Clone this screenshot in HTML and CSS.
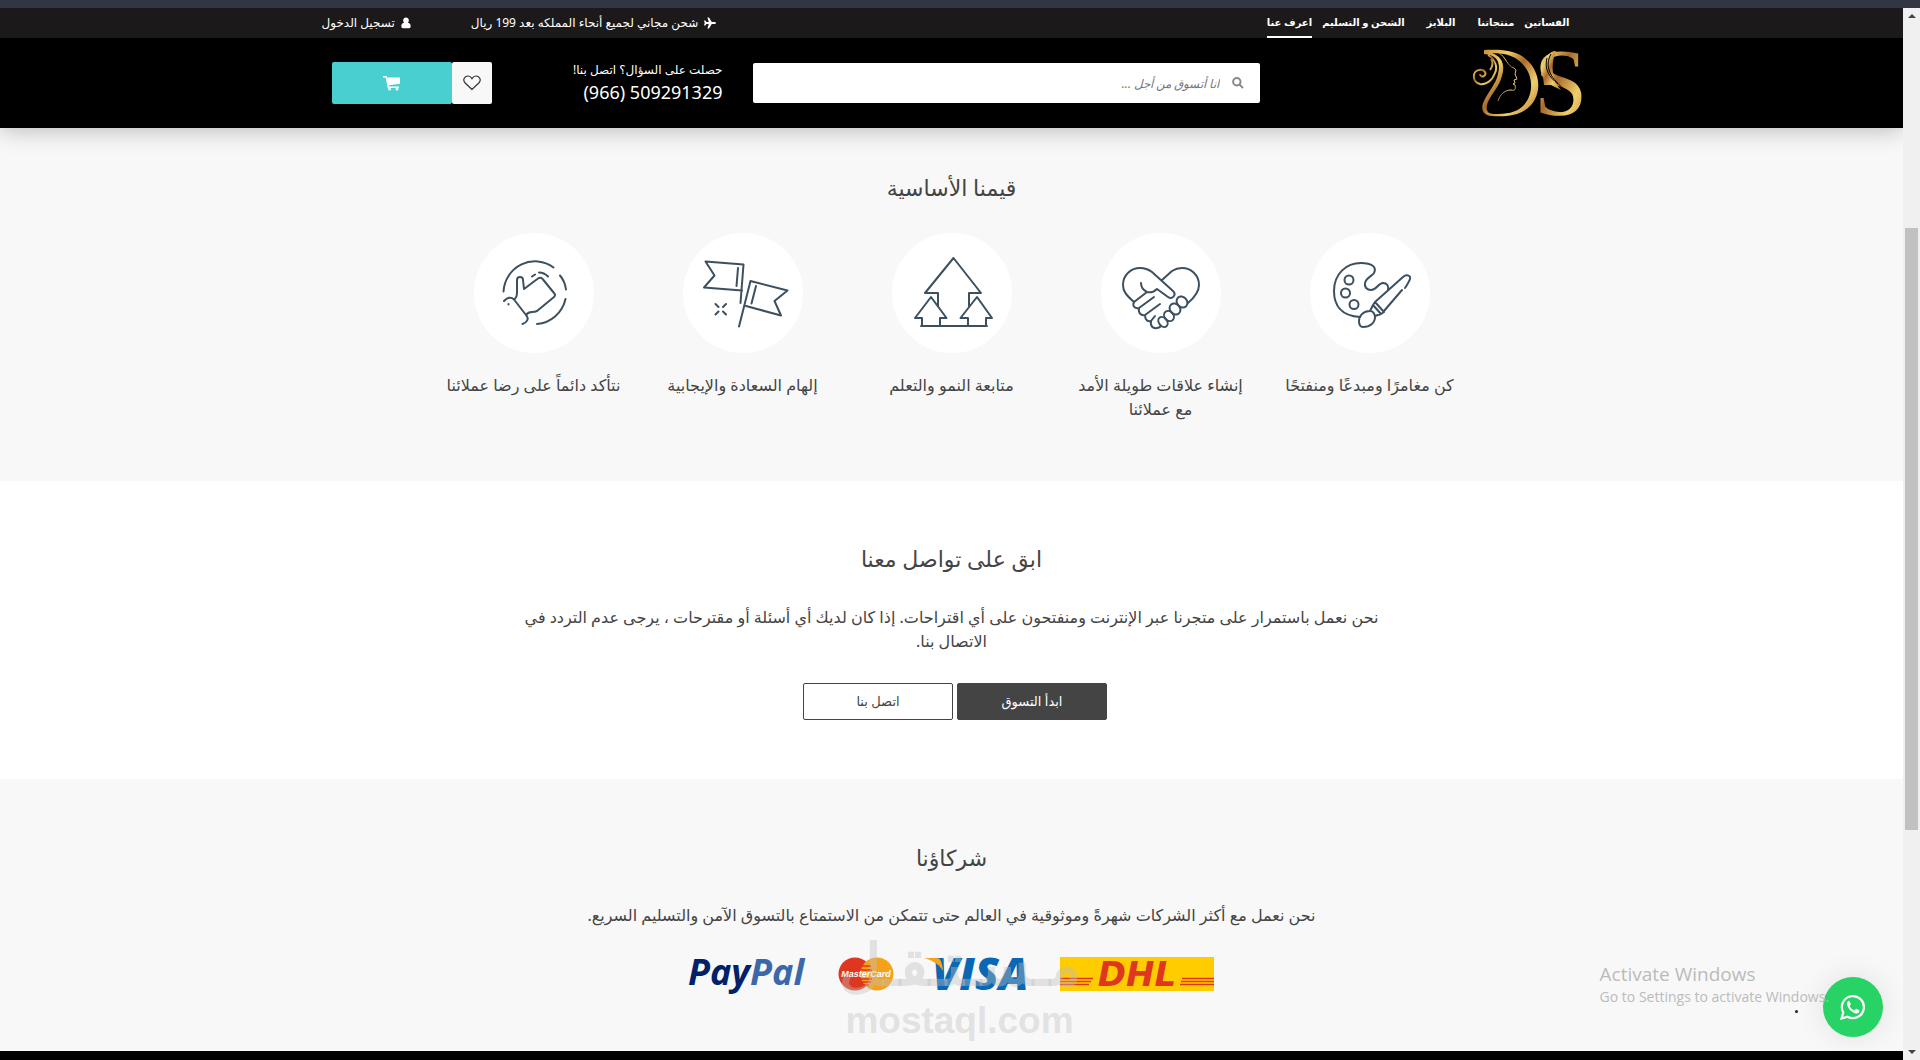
FILE: index.html
```
<!DOCTYPE html>
<html lang="ar" dir="rtl">
<head>
    <meta charset="UTF-8">
    <meta name="viewport" content="width=device-width, initial-scale=1.0">
    <title>DS - اعرف عنا</title>
    <link rel="stylesheet" href="styles.css">
</head>
<body>

    <div class="window-edge"></div>

    <div class="window">
        <div class="page">

            <header class="site-header">
                <div class="topbar">
                    <div class="container topbar-inner">
                        <nav>
                            <a href="#dresses">الفساتين</a>
                            <a href="#products">منتجاتنا</a>
                            <a href="#blazers" class="wide">البلايز</a>
                            <a href="#shipping">الشحن و التسليم</a>
                            <a href="#about" class="active">اعرف عنا</a>
                        </nav>
                        <div class="top-info">
                            <p class="shipping">
                                <svg width="12" height="12" viewBox="0 0 12 12"><path d="M12 6c0 .6-.9 1-2 1H7.800L5 11.500H3.400L4.800 7H2.500L1.300 8.500H0L.7 6 0 3.500h1.300L2.500 5h2.300L3.400.5H5L7.800 5H10c1.100 0 2 .4 2 1z" fill="#fff"/></svg>
                                شحن مجاني لجميع أنحاء المملكه بعد 199 ريال
                            </p>
                            <a href="#login" class="login">
                                <svg width="10" height="12" viewBox="0 0 10 12"><path d="M5 .5a2.800 3 0 0 1 2 5.200c1.800.3 2.700 1.500 2.700 3.500 0 1.300-.7 2-1.700 2H2c-1 0-1.700-.7-1.700-2 0-2 .9-3.200 2.700-3.500A2.800 3 0 0 1 5 .5z" fill="#fff"/></svg>
                                تسجيل الدخول
                            </a>
                        </div>
                    </div>
                </div>

                <div class="masthead">
                    <div class="container masthead-inner">
                        <a href="#home" class="logo" aria-label="DS">
                            <svg width="110" height="70" viewBox="0 0 110 70" direction="ltr">
                                <defs>
                                    <linearGradient id="gold" x1="0" y1="0" x2="1" y2="1">
                                        <stop offset="0" stop-color="#c98a2e"/>
                                        <stop offset=".25" stop-color="#efcf6a"/>
                                        <stop offset=".45" stop-color="#a9692b"/>
                                        <stop offset=".7" stop-color="#efcf6a"/>
                                        <stop offset="1" stop-color="#b9772c"/>
                                    </linearGradient>
                                </defs>
                                <!-- flowing hair and frame -->
                                <path d="M12 2C36 1 48 4 57 14c12 13 12 32 2 43-9 10-23 12-39 11-9 0-12-7-8-15 4-9 12-17 14-27 3-12-1-19-14-20L12 2zm8 3c11 4 13 13 10 23-3 11-10 17-14 26-3 8-1 12 6 12 12 0 22-1 29-8 11-11 10-29 2-39C45 8 34 5 20 5z" fill="url(#gold)" fill-rule="evenodd"/>
                                <path d="M16 7c7 4 10 12 7 18-3 8-9 12-15 11-8-2-8-13-1-14 6-1 8 4 5 6-2 1-4 0-4-2M18 22c3-4 3-8 1-11" fill="none" stroke="url(#gold)" stroke-width="2"/>
                                <!-- profile -->
                                <path d="M27 5c7 4 8 13 15 15l2 2-1 4 2 5-3 1 1 3-2 1 2 1c1 4 0 6-4 5-7 0-11 5-13 11" fill="none" stroke="url(#gold)" stroke-width="1"/>
                                <text x="62" y="67" class="logo-letter" fill="url(#gold)">S</text>
                                <path d="M82 3c-9 4-12 10-11 18l-2 6 2 2 1 8 7 0 10 5C80 33 78 18 84 3z" fill="url(#gold)"/>
                                <path d="M79 6c-6 11-3 22 13 35M75 10c-3 11 2 19 11 26" fill="none" stroke="#000" stroke-width="1"/>
                            </svg>
                        </a>

                        <form class="search">
                            <label for="q"><svg width="12" height="12" viewBox="0 0 12 12"><circle cx="4.800" cy="4.800" r="3.700"/><path d="M7.600 7.600L11 11"/></svg></label>
                            <input type="text" id="q" placeholder="انا أتسوق من أجل ...">
                        </form>

                        <div class="contact">
                            <p>حصلت على السؤال؟ اتصل بنا!</p>
                            <a href="tel:966509291329" dir="ltr">(966) 509291329</a>
                        </div>

                        <div class="actions">
                            <button type="button" class="wish" aria-label="المفضلة">
                                <svg width="18" height="16" viewBox="0 0 18 16"><path d="M9 14.500L2.200 8C-1 4.500 2 1 5 1c2 0 3.200 1.300 4 2.600C9.800 2.300 11 1 13 1c3 0 6 3.500 2.800 7z" fill="none" stroke="#333" stroke-width="1.200"/></svg>
                            </button>
                            <button type="button" class="cart" aria-label="السلة">
                                <svg width="18" height="16" viewBox="0 0 18 16"><path d="M0 1h3.500l.5 1.500h13v6.200L6 10.200l.2 1.300H16V13H4.800L2.600 2.500H0z" fill="#fff"/><circle cx="6.500" cy="14" r="1.500" fill="#fff"/><circle cx="14" cy="14" r="1.500" fill="#fff"/></svg>
                            </button>
                        </div>
                    </div>
                </div>
            </header>

            <section class="values">
                <h2>قيمنا الأساسية</h2>
                <ul>
                    <li>
                        <svg class="icon" viewBox="0 0 120 120">
                            <path d="M50 84C31 83 24 72 24 58c0-17 12-28 27-28 11 0 16 4 13 10-2 3-8 5-9 10-1 4 2 7 6 7 6 0 7-7 12-7 4 0 6 3 5 7"/>
                            <circle cx="39" cy="47" r="4.500"/><circle cx="35.500" cy="60" r="4.500"/><circle cx="44" cy="71.500" r="4.500"/>
                            <path d="M65 69l28-25c3-3 8-2 7 2-1 3-3 6-5 9M92 57L74 78M65 69l9 10M63 72l8 9M65 69l-2 3-3 6M74 79l-3 2-6 2M60 78c-7 0-11 5-11 10 0 4 1 6 4 6 7 0 12-4 12-10 0-3-2-6-5-6z"/>
                        </svg>
                        <p>كن مغامرًا ومبدعًا ومنفتحًا</p>
                    </li>
                    <li>
                        <svg class="icon" viewBox="0 0 120 120">
                            <path d="M33 69C25 62 22 58 22 52c0-10 8-17 17-17 5 0 8 1 12 4l21 19c4 4-1 9-5 6l-11-8c-3 3-6 4-10 3-4-2-6-5-6-9M46 59L33 69M61 47l10-9c3-2 6-3 10-3 9 0 17 7 17 17 0 7-4 12-11 18"/>
                            <path d="M33 69c-2 4 1 7 5 6-1 5 2 8 6 7 0 5 3 7 6 6M38 75l15-11M44 82l15-11M50 88l4-5"/>
                            <ellipse cx="81" cy="69" rx="5" ry="6" transform="rotate(-40 81 69)"/>
                            <ellipse cx="74" cy="76" rx="5" ry="6" transform="rotate(-40 74 76)"/>
                            <ellipse cx="68" cy="83" rx="4.500" ry="5.500" transform="rotate(-40 68 83)"/>
                            <ellipse cx="62" cy="89" rx="4" ry="5.500" transform="rotate(-40 62 89)"/>
                            <path d="M50 88c-1 5 2 8 6 7 2 0 3-1 4-2"/>
                        </svg>
                        <p>إنشاء علاقات طويلة الأمد مع عملائنا</p>
                    </li>
                    <li>
                        <svg class="icon" viewBox="0 0 120 120">
                            <path d="M46 73V60H33l28.500-35L89 60H77v13M30 93v-8h-7l16-21 15.500 21H48v8M76 93v-8h-7.500L85 64l15 21h-6v8M29 93h66"/>
                        </svg>
                        <p>متابعة النمو والتعلم</p>
                    </li>
                    <li>
                        <svg class="icon" viewBox="0 0 120 120">
                            <path d="M59 57.500l-38-3 10.500-12-9-14 38 3L57.500 70M55 35l-1.500 18M67.500 48l37 9.500-13 10.500 6.500 14.500L63 73M67.500 48L56 93.500M73 53l-4.500 17.500M32.500 71l3 3M43 71l-3 3M32.500 81.500l3-3M43 81.500l-3-3"/>
                        </svg>
                        <p>إلهام السعادة والإيجابية</p>
                    </li>
                    <li>
                        <svg class="icon" viewBox="0 0 120 120">
                            <path d="M29.500 58.500A31.500 32 0 0 1 79.500 34.500M86 42.500q5 6 6 14M91.500 66A32 32 0 0 1 63 91"/>
                            <path d="M40 66.500q3-2 3-7V47c0-4 6-4 6 0l1 9 14-10.500q3-2 5 1L80 60q2 2 0 4L63 78q-2 1-5 1-4 0-6 3L40 66.500c-3-3-7-2-10 1.500M52 82c4 4 0 8-3.500 9M58 43.500l3-2M65 39.500q5 0 9 4M34.500 71v.5"/>
                        </svg>
                        <p>نتأكد دائماً على رضا عملائنا</p>
                    </li>
                </ul>
            </section>

            <section class="touch">
                <h2>ابق على تواصل معنا</h2>
                <p>نحن نعمل باستمرار على متجرنا عبر الإنترنت ومنفتحون على أي اقتراحات. إذا كان لديك أي أسئلة أو مقترحات ، يرجى عدم التردد في الاتصال بنا.</p>
                <div class="buttons">
                    <a href="#shop" class="btn btn-dark">ابدأ التسوق</a>
                    <a href="#contact" class="btn">اتصل بنا</a>
                </div>
            </section>

            <section class="partners">
                <h2>شركاؤنا</h2>
                <p>نحن نعمل مع أكثر الشركات شهرةً وموثوقية في العالم حتى تتمكن من الاستمتاع بالتسوق الآمن والتسليم السريع.</p>
                <div class="brands" dir="ltr">
                    <svg width="120" height="42" viewBox="0 0 120 42" class="paypal"><text x="0" y="28"><tspan fill="#012169">Pay</tspan><tspan fill="#3a68a8">Pal</tspan></text></svg>
                    <svg width="56" height="34" viewBox="0 0 56 34" class="mastercard">
                        <circle cx="17" cy="17" r="16.500" fill="#df3620"/><circle cx="39" cy="17" r="16.500" fill="#f5a21b"/>
                        <path d="M24 9h9M22 13h12M22 22h12M23 25h10M25 28h6" stroke="#df3620" stroke-width="1.500"/>
                        <text x="28" y="20">MasterCard</text>
                    </svg>
                    <svg width="106" height="34" viewBox="0 0 106 34" class="visa"><text x="8" y="33">VISA</text><path d="M0 1h13c3 0 5 3 6 13C15 7 8 3 0 1z" fill="#f5a21b"/></svg>
                    <svg width="154" height="34" viewBox="0 0 154 34" class="dhl">
                        <path d="M0 0h154v34H0z" fill="#fc0"/>
                        <path d="M0 21.500h33M0 24.500h31M0 27.500h29M122 21.500h32M121 24.500h33M120 27.500h34" stroke="#df3620" stroke-width="1.500"/>
                        <text x="77" y="29">DHL</text>
                    </svg>
                </div>
                <div class="watermark">
                    <span class="watermark-ar">مـسـتـقـل</span>
                    <span class="watermark-en">mostaql.com</span>
                </div>
            </section>

            <footer></footer>

            <div class="activate" dir="ltr">
                <strong>Activate Windows</strong>
                <span>Go to Settings to activate Windows.</span>
            </div>
            <span class="speck"></span>
            <a href="#whatsapp" class="whatsapp" aria-label="WhatsApp">
                <svg width="26" height="26" viewBox="0 0 26 26">
                    <path d="M1.500 24.500l1.800-6A11 11 0 1 1 7.500 22.700z" fill="none" stroke="#fff" stroke-width="2.200"/>
                    <path d="M9 6.500c-2 1-2.500 3-1.500 5.500 1.500 3.500 4 6 7.500 7.300 2.500.8 4.500-.3 4.500-2.800l-3.300-1.800-1.700 1.900c-2.300-.9-3.900-2.500-4.900-4.600l1.300-1.700z" fill="#fff"/>
                </svg>
            </a>
        </div>

        <div class="scrollbar">
            <span class="arrow-up"></span>
            <span class="track"><span class="thumb"></span></span>
            <span class="arrow-down"></span>
        </div>
    </div>

</body>
</html>
```
FILE: styles.css
```
* {
    margin: 0;
    padding: 0;
    box-sizing: border-box;
}

body {
    font-family: "Noto Sans", "Open Sans", "DejaVu Sans", sans-serif;
    font-size: 16px;
    line-height: 24px;
    color: #444;
    background-color: #f8f8f8;
    height: 100vh;
    display: flex;
    flex-direction: column;
    overflow: hidden;
}

a {
    color: inherit;
    text-decoration: none;
}

.window-edge {
    height: 8px;
    background-color: #323644;
    flex-shrink: 0;
}

.window {
    flex: 1;
    min-height: 0;
    display: flex;
    flex-direction: row-reverse;
}

.page {
    flex: 1;
    position: relative;
    display: flex;
    flex-direction: column;
    overflow: hidden;
}

.container {
    max-width: 1260px;
    margin: 0 auto;
}

/* header */
.site-header {
    position: relative;
    z-index: 2;
    color: #fff;
    box-shadow: 0 0 24px rgba(0,0,0,0.3);
}

.topbar {
    background-color: #1b191a;
    font-size: 12px;
}

.topbar-inner {
    display: flex;
    justify-content: space-between;
    height: 30px;
    padding-right: 12px;
}

nav {
    display: flex;
    gap: 10px;
}

nav a {
    font-size: 10px;
    font-weight: bold;
    line-height: 28px;
    border-bottom: 2px solid transparent;
}

nav a.wide {
    margin: 0 12px;
}

nav a.active {
    border-color: #fff;
}

.top-info {
    display: flex;
    gap: 68px;
    line-height: 30px;
}

.shipping, .login {
    display: flex;
    align-items: center;
    gap: 6px;
}

.shipping {
    margin-right: -8px;
}

.top-info {
    gap: 60px;
}

.masthead {
    background-color: #000;
}

.masthead-inner {
    display: grid;
    grid-template-columns: 322fr 507fr 181fr 250fr;
    align-items: center;
    height: 90px;
}

.logo svg {
    display: block;
    overflow: visible;
}

.logo-letter {
    font-family: "Liberation Serif", serif;
    font-size: 96px;
}

.search {
    display: flex;
    align-items: center;
    height: 40px;
    padding: 0 16px;
    gap: 12px;
    background-color: #fff;
    border-radius: 2px;
}

.search svg {
    display: block;
    fill: none;
    stroke: #888;
    stroke-width: 2;
}

.search input {
    flex: 1;
    border: 0;
    outline: 0;
    font: italic 12px "Noto Sans", "Open Sans", sans-serif;
    background: none;
}

.search input::placeholder {
    color: #777;
}

.contact {
    padding: 0 30px 2px 0;
    font-size: 12px;
    line-height: 20px;
    white-space: nowrap;
}

.contact a {
    display: block;
    font-size: 18px;
    line-height: 24px;
    text-align: right;
}

.actions {
    display: flex;
    justify-content: flex-end;
    padding-left: 10px;
}

.actions button {
    display: flex;
    align-items: center;
    justify-content: center;
    width: 40px;
    height: 42px;
    border: 0;
    border-radius: 2px;
    background-color: #f8f8f8;
}

.actions .cart {
    width: 120px;
    background-color: #48cfd0;
}

/* sections */
section {
    text-align: center;
    flex-shrink: 0;
}

h2 {
    font-size: 22px;
    font-weight: normal;
    line-height: 32px;
}

.values {
    padding: 43px 0 60px;
}

.values ul {
    list-style: none;
    display: grid;
    grid-template-columns: repeat(5, 1fr);
    max-width: 1045px;
    margin: 30px auto 0;
}

.values li {
    padding: 0 16px;
}

.icon {
    display: block;
    width: 120px;
    height: 120px;
    margin: 0 auto 20px;
    border-radius: 50%;
    background-color: #fff;
    fill: none;
    stroke: #3c5060;
    stroke-width: 2;
    stroke-linecap: round;
    stroke-linejoin: round;
}

.touch {
    background-color: #fff;
    padding: 61px 0 59px;
}

.touch p {
    max-width: 864px;
    margin: 31px auto 30px;
}

.buttons {
    display: flex;
    justify-content: center;
    gap: 4px;
    padding-left: 7px;
}

.btn {
    width: 150px;
    border: 1px solid #444;
    border-radius: 2px;
    font-size: 13px;
    line-height: 35px;
}

.btn-dark {
    background-color: #444;
    color: #fff;
}

.partners {
    position: relative;
    padding: 62px 0 51px;
}

.partners p {
    margin: 30px 0;
}

.brands {
    display: flex;
    justify-content: center;
    gap: 30px;
    height: 43px;
    padding-right: 2px;
}

.brands svg {
    overflow: visible;
}

.brands text {
    font-family: "Open Sans", sans-serif;
    font-weight: bold;
    font-style: italic;
}

.paypal text {
    font-size: 36px;
}

.mastercard text {
    font-family: "Liberation Sans", sans-serif;
    font-size: 9px;
    fill: #fff;
    text-anchor: middle;
}

.visa text {
    font-size: 44px;
    font-weight: 800;
    fill: #0868b5;
}

.dhl text {
    font-family: "DejaVu Sans", sans-serif;
    font-size: 34px;
    fill: #df3620;
    text-anchor: middle;
}

.watermark {
    position: absolute;
    left: 0;
    right: 0;
    bottom: 10px;
    padding-left: 16px;
    color: rgba(190,190,190,0.4);
    font-family: "Liberation Sans", "Noto Sans", sans-serif;
    font-weight: bold;
    pointer-events: none;
}

.watermark span {
    display: block;
}

.watermark-ar {
    font-size: 58px;
    line-height: 72px;
}

.watermark-en {
    font-size: 37px;
    line-height: 40px;
}

footer {
    flex: 1 0 10px;
    background-color: #000;
}

/* things floating over the page */
.whatsapp {
    position: absolute;
    right: 20px;
    bottom: 23px;
    width: 60px;
    height: 60px;
    display: flex;
    align-items: center;
    justify-content: center;
    border-radius: 50%;
    background-color: #28d366;
    box-shadow: 0 0 30px rgba(0,0,0,0.1);
}

.activate {
    position: absolute;
    right: 74px;
    bottom: 53px;
    z-index: 1;
    color: #bbb;
    font-family: "Open Sans", sans-serif;
    font-size: 14px;
    line-height: 20px;
    text-align: left;
}

.activate strong, .activate span {
    display: block;
    font-weight: normal;
}

.activate strong {
    font-size: 19px;
    line-height: 26px;
}

.speck {
    position: absolute;
    right: 105px;
    bottom: 47px;
    width: 3px;
    height: 3px;
    border-radius: 50%;
    background-color: #222;
}

/* scrollbar */
.scrollbar {
    width: 17px;
    padding: 6px 2px;
    display: flex;
    flex-direction: column;
    align-items: center;
    background-color: #f0f0f0;
}

.arrow-up, .arrow-down {
    border: 4px solid transparent;
}

.arrow-up {
    border-top: 0;
    border-bottom-color: #444;
}

.arrow-down {
    border-bottom: 0;
    border-top-color: #444;
}

.track {
    flex: 1;
    width: 13px;
    display: flex;
    flex-direction: column;
}

.track::before {
    content: "";
    flex: 210;
}

.track::after {
    content: "";
    flex: 220;
}

.thumb {
    flex: 602;
    background-color: #c1c1c1;
}
```
